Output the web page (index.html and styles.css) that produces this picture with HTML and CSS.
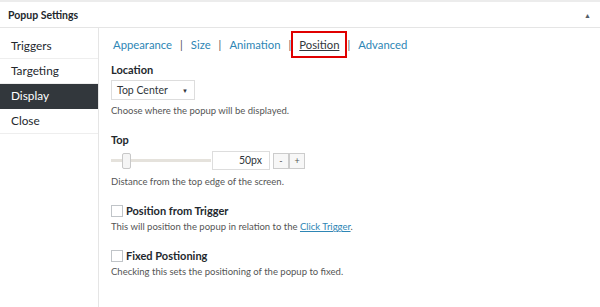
FILE: index.html
```html
<!DOCTYPE html>
<html>
<head>
<meta charset="utf-8">
<link rel="stylesheet" href="styles.css">
</head>
<body>
<div class="box">
  <div class="box-head">
    <span class="box-title">Popup Settings</span>
    <span class="toggle">&#9650;</span>
  </div>
  <div class="box-body">
    <ul class="side">
      <li class="side-item">Triggers</li>
      <li class="side-item">Targeting</li>
      <li class="side-item active">Display</li>
      <li class="side-item">Close</li>
    </ul>
    <div class="content">
      <div class="tabs">
        <a class="tab">Appearance</a><span class="sep">|</span>
        <a class="tab">Size</a><span class="sep">|</span>
        <a class="tab">Animation</a><span class="sep">|</span>
        <a class="tab current">Position</a><span class="sep">|</span>
        <a class="tab">Advanced</a>
      </div>

      <div class="label loc-label">Location</div>
      <div class="select"><span>Top Center</span><span class="caret">&#9660;</span></div>
      <div class="desc d1">Choose where the popup will be displayed.</div>

      <div class="label top-label">Top</div>
      <div class="range-row">
        <div class="slider"><div class="track"></div><div class="thumb"></div></div>
        <div class="num">50px</div>
        <div class="btns"><div class="btn">-</div><div class="btn">+</div></div>
      </div>
      <div class="desc d2">Distance from the top edge of the screen.</div>

      <div class="check-row"><span class="checkbox"></span><span class="label">Position from Trigger</span></div>
      <div class="desc d3">This will position the popup in relation to the <a class="link">Click Trigger</a>.</div>

      <div class="check-row"><span class="checkbox"></span><span class="label">Fixed Postioning</span></div>
      <div class="desc d3">Checking this sets the positioning of the popup to fixed.</div>
    </div>
  </div>
</div>
</body>
</html>
```
FILE: styles.css
```css
* { box-sizing: border-box; }
html, body { margin: 0; padding: 0; background: #fff; }
body { font-family: "Lato", "Open Sans", sans-serif; color: #23282d; width: 600px; height: 307px; overflow: hidden; }
.box { border-top: 2px solid #ececec; height: 307px; display: flex; flex-direction: column; }
.box-head { height: 26px; border-bottom: 1px solid #e5e5e5; display: flex; align-items: center; justify-content: space-between; padding: 0 9px 0 8px; flex: none; }
.box-title { font-size: 10.5px; font-weight: 700; color: #23282d; }
.toggle { font-size: 7px; color: #555d66; }
.box-body { flex: 1; display: flex; }
.side { list-style: none; margin: 0; padding: 6px 0 0; width: 99px; flex: none; border-right: 1px solid #e5e5e5; background: #fff; }
.side-item { height: 25px; line-height: 24px; padding-left: 11px; font-size: 11.8px; color: #23282d; border-bottom: 1px solid #eee; }
.side-item.active { background: #32373c; color: #fff; border-bottom-color: #32373c; }
.content { flex: 1; padding: 6px 0 0 12px; display: flex; flex-direction: column; align-items: flex-start; }
.tabs { display: flex; align-items: center; height: 20px; font-size: 11.3px; padding-left: 2px; }
.tab { color: #2e86b5; }
.tab.current { color: #32373c; text-decoration: underline; border: 2px solid #e00000; padding: 5px 6px; margin: 0 -8px; }
.sep { color: #555; margin: 0 8px; font-size: 11px; }
.label { font-size: 11px; font-weight: 700; color: #23282d; line-height: 14px; }
.loc-label { margin-top: 9px; }
.select { margin-top: 3px; width: 84px; height: 20px; border: 1px solid #ddd; display: flex; align-items: center; justify-content: space-between; padding: 0 6px 0 5px; font-size: 10.5px; color: #32373c; }
.caret { font-size: 6px; }
.desc { font-size: 9.5px; color: #555; line-height: 13px; }
.d1 { margin-top: 4px; }
.top-label { margin-top: 16px; }
.d2 { margin-top: 5px; }
.d3 { margin-top: 2px; }
.link { color: #2e86b5; text-decoration: underline; }
.range-row { display: flex; align-items: center; margin-top: 4px; height: 19px; }
.slider { position: relative; width: 100px; height: 19px; }
.track { position: absolute; left: 0; right: 0; top: 8px; height: 3px; background: #e5e2dc; }
.thumb { position: absolute; left: 11px; top: 2px; width: 9px; height: 16px; background: #f5f5f5; border: 1px solid #c8c8c8; border-radius: 2px; }
.num { width: 58px; height: 19px; border: 1px solid #ddd; font-size: 10.5px; text-align: right; line-height: 17px; padding-right: 7px; margin-left: 1px; color: #32373c; }
.btns { display: flex; margin-left: 3px; }
.btn { width: 16px; height: 16px; border: 1px solid #ccc; background: #f7f7f7; font-size: 9px; display: flex; align-items: center; justify-content: center; color: #555; }
.check-row { display: flex; align-items: center; margin-top: 16px; height: 14px; }
.checkbox { width: 12px; height: 12px; border: 1px solid #c0c4c8; margin-right: 3px; background: #fff; }
```
